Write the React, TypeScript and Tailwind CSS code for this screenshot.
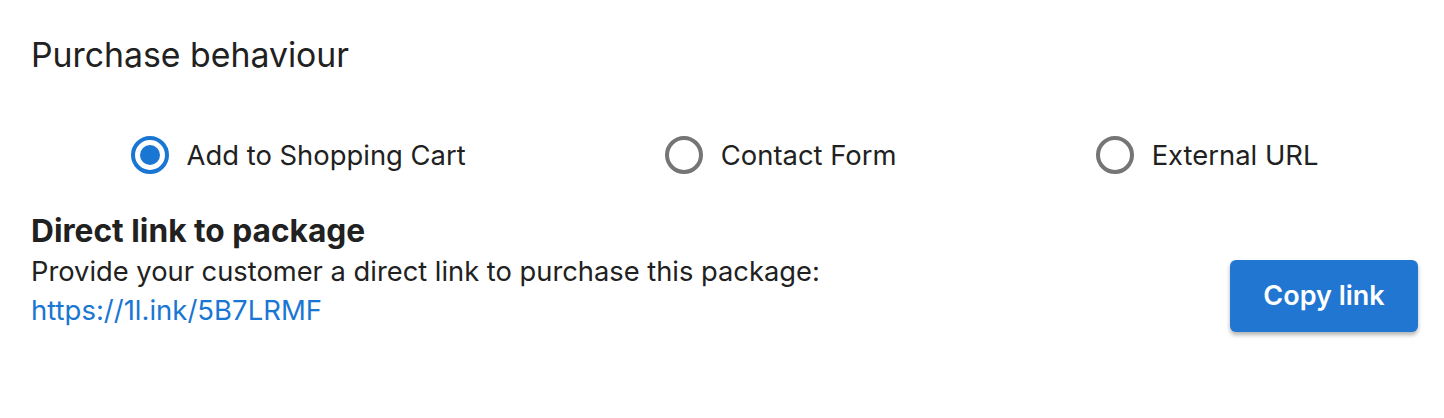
import { useState } from "react";

const options = ["Add to Shopping Cart", "Contact Form", "External URL"];

function Radio({ checked }: { checked: boolean }) {
  return (
    <span
      className={
        checked
          ? "flex h-[38px] w-[38px] shrink-0 items-center justify-center rounded-full border-[4px] border-[#1976d2]"
          : "flex h-[38px] w-[38px] shrink-0 items-center justify-center rounded-full border-[4px] border-[#757575]"
      }
    >
      {checked && <span className="h-[20px] w-[20px] rounded-full bg-[#1976d2]" />}
    </span>
  );
}

export default function App() {
  const [selected, setSelected] = useState(0);

  return (
    <div className="w-[1444px] h-[418px] bg-white text-[#212121] font-['Inter','Liberation_Sans',sans-serif]">
      <div className="pl-[31px] pr-[26px] pt-[35px]">

        {/* TITLE */}
        <h2 className="text-[33.8px] leading-[40px] font-normal">Purchase behaviour</h2>

        {/* OPTIONS */}
        <div className="mt-[61px] flex justify-around">
          {options.map((o, i) => (
            <label
              key={o}
              onClick={() => setSelected(i)}
              className="flex items-center gap-[18px] cursor-pointer"
            >
              <Radio checked={selected === i} />
              <span className="text-[27.4px] leading-[36px]">{o}</span>
            </label>
          ))}
        </div>

        {/* DIRECT LINK */}
        <div className="mt-[38px] flex items-start justify-between">
          <div>
            <h3 className="text-[31.7px] leading-[38px] font-bold">Direct link to package</h3>
            <p className="mt-[3px] text-[27.3px] leading-[38px]">
              Provide your customer a direct link to purchase this package:
            </p>
            <a href="#" className="block text-[27.5px] leading-[38px] text-[#1976d2]">
              https://1l.ink/5B7LRMF
            </a>
          </div>
          <button className="mt-[48px] h-[72px] w-[188px] rounded-[6px] bg-[#2176d2] text-white text-[27px] font-semibold shadow-[0_3px_4px_rgba(0,0,0,0.3)]">
            Copy link
          </button>
        </div>

      </div>
    </div>
  );
}
